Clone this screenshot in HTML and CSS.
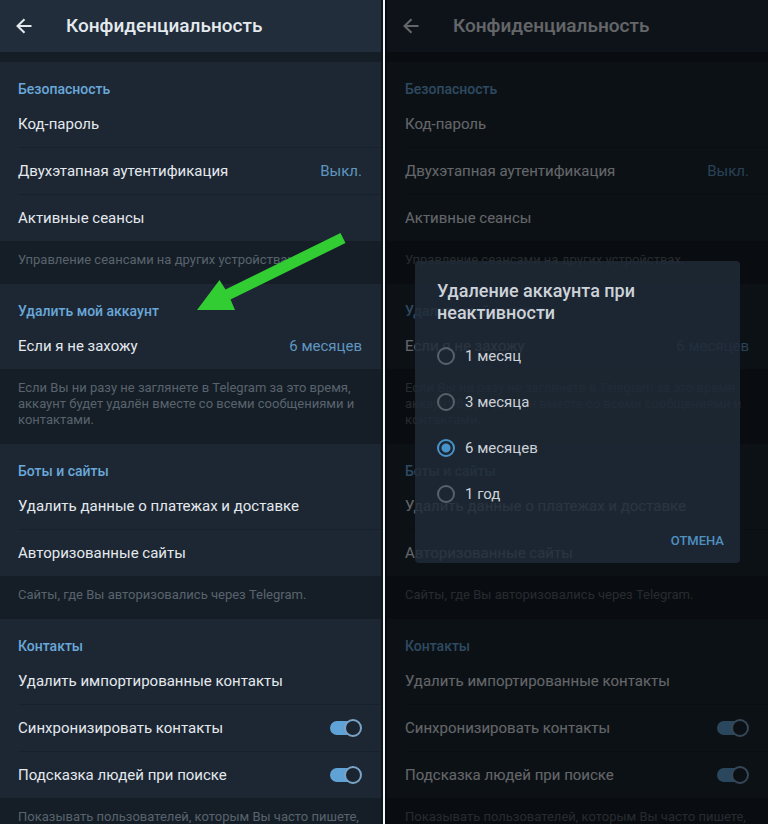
FILE: index.html
```html
<!DOCTYPE html>
<html lang="ru">
<head>
    <meta charset="UTF-8">
    <meta name="viewport" content="width=device-width, initial-scale=1.0">
    <title>Конфиденциальность</title>
    <link rel="stylesheet" href="styles.css">
</head>
<body>

<div class="screens">
    <div class="phone">
        <header class="header">
            <button class="back" type="button" aria-label="Назад">
                <svg width="16" height="16" viewBox="0 0 16 16"><path d="M15.5 8H1.5M8.5 1.2L1.5 8l7 6.8"/></svg>
            </button>
            <h1>Конфиденциальность</h1>
        </header>

        <section class="section">
            <h2>Безопасность</h2>
            <button class="row" type="button">Код-пароль</button>
            <button class="row" type="button">Двухэтапная аутентификация <span class="value">Выкл.</span></button>
            <button class="row" type="button">Активные сеансы</button>
        </section>
        <p class="info">Управление сеансами на других устройствах.</p>

        <section class="section">
            <svg class="arrow" width="149" height="79" viewBox="0 0 149 79"><path d="M0 78L22.5 48 28.5 57.5 143.5 1 148.5 11 33.5 67.5 38 78z"/></svg>
            <h2>Удалить мой аккаунт</h2>
            <button class="row" type="button">Если я не захожу <span class="value">6 месяцев</span></button>
        </section>
        <p class="info">Если Вы ни разу не заглянете в Telegram за это время, аккаунт будет удалён вместе со всеми сообщениями и контактами.</p>

        <section class="section">
            <h2>Боты и сайты</h2>
            <button class="row" type="button">Удалить данные о платежах и доставке</button>
            <button class="row" type="button">Авторизованные сайты</button>
        </section>
        <p class="info">Сайты, где Вы авторизовались через Telegram.</p>

        <section class="section">
            <h2>Контакты</h2>
            <button class="row" type="button">Удалить импортированные контакты</button>
            <label class="row">Синхронизировать контакты <input class="switch" type="checkbox" checked></label>
            <label class="row">Подсказка людей при поиске <input class="switch" type="checkbox" checked></label>
        </section>
        <p class="info">Показывать пользователей, которым Вы часто пишете,</p>
    </div>

    <div class="phone phone-dimmed">
        <header class="header">
            <button class="back" type="button" aria-label="Назад">
                <svg width="16" height="16" viewBox="0 0 16 16"><path d="M15.5 8H1.5M8.5 1.2L1.5 8l7 6.8"/></svg>
            </button>
            <h1>Конфиденциальность</h1>
        </header>

        <section class="section">
            <h2>Безопасность</h2>
            <button class="row" type="button">Код-пароль</button>
            <button class="row" type="button">Двухэтапная аутентификация <span class="value">Выкл.</span></button>
            <button class="row" type="button">Активные сеансы</button>
        </section>
        <p class="info">Управление сеансами на других устройствах.</p>

        <section class="section">
            <h2>Удалить мой аккаунт</h2>
            <button class="row" type="button">Если я не захожу <span class="value">6 месяцев</span></button>
        </section>
        <p class="info">Если Вы ни разу не заглянете в Telegram за это время, аккаунт будет удалён вместе со всеми сообщениями и контактами.</p>

        <section class="section">
            <h2>Боты и сайты</h2>
            <button class="row" type="button">Удалить данные о платежах и доставке</button>
            <button class="row" type="button">Авторизованные сайты</button>
        </section>
        <p class="info">Сайты, где Вы авторизовались через Telegram.</p>

        <section class="section">
            <h2>Контакты</h2>
            <button class="row" type="button">Удалить импортированные контакты</button>
            <label class="row">Синхронизировать контакты <input class="switch" type="checkbox" checked></label>
            <label class="row">Подсказка людей при поиске <input class="switch" type="checkbox" checked></label>
        </section>
        <p class="info">Показывать пользователей, которым Вы часто пишете,</p>

        <div class="overlay">
            <div class="dialog" role="dialog" aria-labelledby="dialog-title">
                <h2 class="dialog-title" id="dialog-title">Удаление аккаунта при неактивности</h2>
                <label class="option"><input type="radio" name="period"> 1 месяц</label>
                <label class="option"><input type="radio" name="period"> 3 месяца</label>
                <label class="option"><input type="radio" name="period" checked> 6 месяцев</label>
                <label class="option"><input type="radio" name="period"> 1 год</label>
                <button class="cancel" type="button">ОТМЕНА</button>
            </div>
        </div>
    </div>
</div>

</body>
</html>
```
FILE: styles.css
```css
*, *::before, *::after {
    box-sizing: border-box;
}

body {
    margin: 0;
    background: #f4f6f8;
    font-family: Roboto, "Noto Sans", sans-serif;
    color: #e4e9ee;
}

h1, h2, p {
    margin: 0;
}

button {
    border: 0;
    padding: 0;
    background: none;
    color: inherit;
    font: inherit;
    cursor: pointer;
}

.screens {
    display: grid;
    grid-template-columns: 1fr 1fr;
    column-gap: 2px;
}

.phone {
    position: relative;
    height: 100vh;
    overflow: hidden;
    background: #151e27;
    border-right: 2px solid #0d151d;
}

.phone-dimmed {
    border-right: 0;
    border-left: 2px solid #05090d;
}

/* header */
.header {
    display: flex;
    align-items: center;
    height: 52px;
    padding: 0 16px;
    margin-bottom: 10px;
    background: #212d3a;
}

.header h1 {
    font-size: 19px;
    line-height: 24px;
    font-weight: 500;
}

.back {
    display: flex;
    width: 50px;
}

.back svg {
    fill: none;
    stroke: #e4e9ee;
    stroke-width: 2;
}

/* settings */
.section {
    position: relative;
    background: #1d2733;
}

.section h2 {
    padding: 16px 18px 0;
    font-size: 14px;
    line-height: 22px;
    font-weight: 500;
    color: #69a8da;
}

.row {
    position: relative;
    display: flex;
    justify-content: space-between;
    align-items: center;
    width: 100%;
    height: 47px;
    padding: 0 19px 0 18px;
    font-size: 15px;
    text-align: left;
}

.row + .row::before {
    content: "";
    position: absolute;
    top: 0;
    left: 18px;
    right: 0;
    height: 1px;
    background: #18212b;
}

.value {
    color: #5f96c0;
}

.info {
    padding: 11px 18px 16px;
    font-size: 13px;
    line-height: 16px;
    color: #59636d;
}

.switch {
    appearance: none;
    position: relative;
    width: 32px;
    height: 18px;
    margin: 0;
}

.switch::before {
    content: "";
    position: absolute;
    top: 2px;
    left: 0;
    width: 26px;
    height: 14px;
    border-radius: 7px;
    background: #61a2d6;
}

.switch::after {
    content: "";
    position: absolute;
    top: 0;
    right: 0;
    width: 18px;
    height: 18px;
    border: 2px solid #7aa3c5;
    border-radius: 50%;
    background: #1b2531;
}

.arrow {
    position: absolute;
    top: -52px;
    left: 197px;
    z-index: 1;
    fill: #32cd32;
}

/* dialog */
.overlay {
    position: absolute;
    inset: 0;
    display: flex;
    align-items: center;
    padding: 0 28px;
    background: rgba(0, 0, 0, 0.56);
}

.dialog {
    display: flex;
    flex-direction: column;
    width: 100%;
    padding: 19px 16px 0 22px;
    border-radius: 4px;
    background: rgba(32, 43, 56, 0.84);
    color: #ccd2d8;
}

.dialog-title {
    margin-bottom: 9px;
    font-size: 18px;
    line-height: 22px;
    font-weight: 500;
}

.option {
    display: flex;
    align-items: center;
    gap: 10px;
    height: 46px;
    font-size: 15px;
}

.option input {
    appearance: none;
    width: 18px;
    height: 18px;
    margin: 0;
    border: 2px solid #56616c;
    border-radius: 50%;
}

.option input:checked {
    border-color: #4793c9;
    background: radial-gradient(circle, #4793c9 4px, transparent 5px);
}

.cancel {
    align-self: flex-end;
    height: 46px;
    font-size: 13px;
    font-weight: 500;
    color: #4f90c0;
}
```
